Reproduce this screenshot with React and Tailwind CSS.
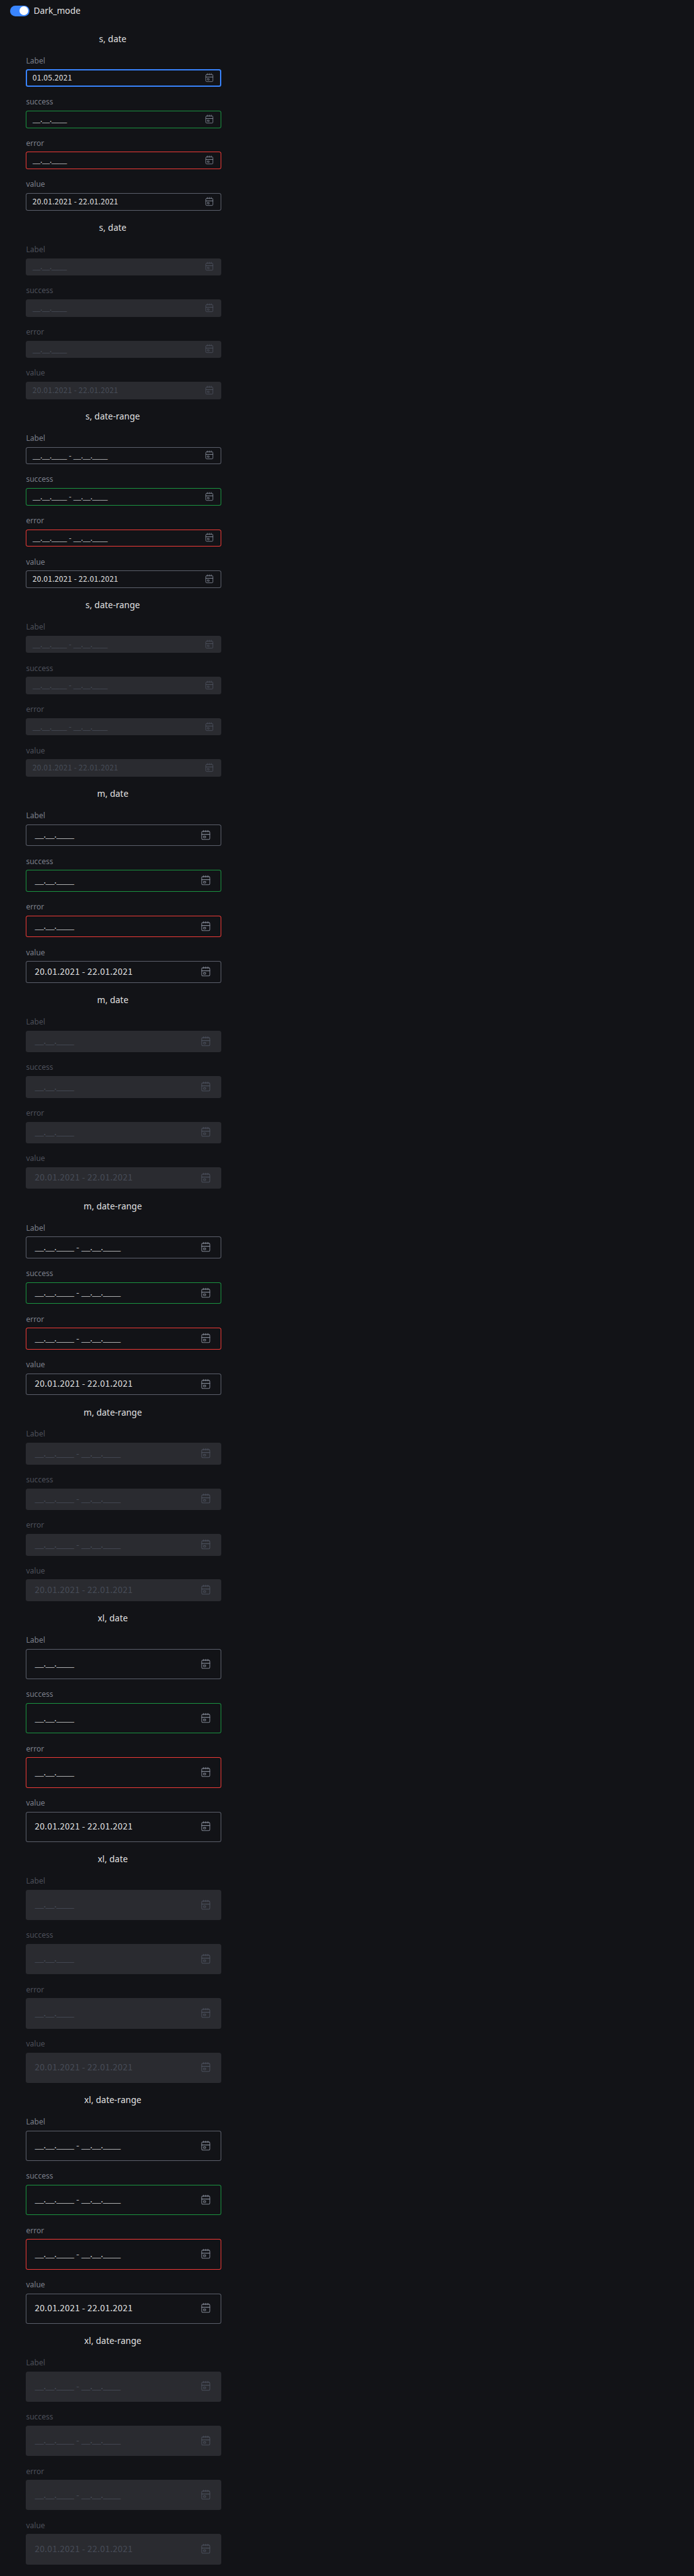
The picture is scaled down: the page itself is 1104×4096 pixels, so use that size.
import React from "react";

const SECTIONS = ["s", "m", "xl"].flatMap((size) =>
  ["date", "date-range"].flatMap((type) =>
    [false, true].map((disabled) => ({ size, type, disabled }))
  )
);

const RANGE = "20.01.2021 - 22.01.2021";
const MASK = { date: "__.__.____", "date-range": "__.__.____ - __.__.____" };

const BOX = {
  s: "h-[27.6px] pl-[10.35px] pr-[9.9px]",
  m: "h-[34.5px] pl-[13.8px] pr-[13.8px]",
  xl: "h-[48.3px] pl-[13.8px] pr-[13.8px]",
};
const VALUE = {
  s: "text-[12.075px] tracking-[0.27px]",
  m: "text-[13.8px] tracking-[0.31px]",
  xl: "text-[13.8px] tracking-[0.31px]",
};
const PLACEHOLDER = {
  s: "text-[12.075px] tracking-[-0.62px] [word-spacing:1.28px]",
  m: "text-[13.8px] tracking-[-0.71px] [word-spacing:1.47px]",
  xl: "text-[13.8px] tracking-[-0.71px] [word-spacing:1.47px]",
};
const RING = {
  focus: "shadow-[inset_0_0_0_2px_#3985ff]",
  success: "shadow-[inset_0_0_0_1px_#1a9641]",
  error: "shadow-[inset_0_0_0_1px_#f23b37]",
  plain: "shadow-[inset_0_0_0_1px_#5d616d]",
};

function CalendarIcon({ small, disabled }) {
  return (
    <svg
      viewBox="0 0 24 24"
      fill="none"
      stroke="currentColor"
      strokeWidth="1.2"
      strokeLinecap="round"
      className={`shrink-0 ${small ? "size-[18.1px]" : "size-[20.7px]"} ${disabled ? "text-[#4a4f5b]" : "text-[#808693]"}`}
    >
      <rect x="4.5" y="4.5" width="15" height="15" rx="2" />
      <path d="M8 2.5v3M12 2.5v3M16 2.5v3" />
      <path d="M4.5 10h15" strokeWidth="1.5" />
      <rect x="7.8" y="13.4" width="4" height="2.8" rx="0.8" />
    </svg>
  );
}

function Field({ label, size, disabled, ring, value, mask }) {
  const tone = disabled ? "text-[#474c57]" : value ? "text-[#e2e2e3]" : "text-[#c6c7c9]";
  return (
    <div className="mb-[17.266px]">
      <div className={`h-[20.7px] text-[12.075px] leading-[13px] ${disabled ? "text-[#4c4f59]" : "text-[#7b7f8a]"}`}>
        {label}
      </div>
      <div
        className={`flex items-center justify-between rounded-[3.5px] ${BOX[size]} ${disabled ? "bg-[#2a2b30]" : RING[ring]}`}
      >
        <span
          className={`pb-[1.7px] leading-none whitespace-nowrap font-['Noto_Sans_CJK_SC',sans-serif] ${tone} ${value ? VALUE[size] : PLACEHOLDER[size]}`}
        >
          {value || mask}
        </span>
        <CalendarIcon small={size === "s"} disabled={disabled} />
      </div>
    </div>
  );
}

function Section({ size, type, disabled, first }) {
  const common = { size, disabled, mask: MASK[type] };
  return (
    <section>
      <h2 className="-ml-[17.25px] mr-[17.25px] mb-[17.25px] h-[20.7px] text-center text-[13.8px] leading-[20.7px] tracking-[0.1px] text-[#e2e2e3]">
        {size}, {type}
      </h2>
      <Field {...common} label="Label" ring={first ? "focus" : "plain"} value={first ? "01.05.2021" : ""} />
      <Field {...common} label="success" ring="success" />
      <Field {...common} label="error" ring="error" />
      <Field {...common} label="value" ring="plain" value={RANGE} />
    </section>
  );
}

export default function App() {
  return (
    <div className="h-[4096px] w-full overflow-hidden bg-[#121317] font-['Noto_Sans',sans-serif]">
      <header className="flex h-[51.75px] items-start pt-[6.9px] pl-[15.5px]">
        <div className="flex h-[20.7px] items-center gap-[6.9px]">
          <span className="flex h-[17.25px] w-[31px] items-center justify-end rounded-full bg-[#3985ff] pr-[1.7px]">
            <span className="size-[13.8px] rounded-full bg-white" />
          </span>
          <span className="text-[13.8px] leading-[20.7px] text-[#e2e2e3]">Dark_mode</span>
        </div>
      </header>
      <main className="ml-[41.4px] w-[310.5px]">
        {SECTIONS.map((s, i) => (
          <Section key={i} {...s} first={i === 0} />
        ))}
      </main>
    </div>
  );
}
